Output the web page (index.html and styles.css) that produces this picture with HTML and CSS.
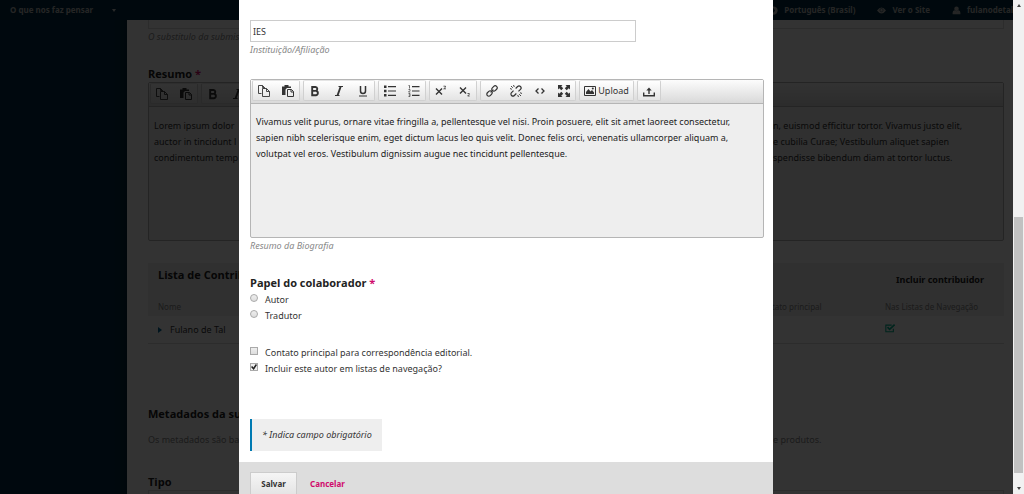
FILE: index.html
```
<!DOCTYPE html>
<html lang="pt-BR">
<head>
<meta charset="utf-8">
<title>Contribuidores</title>
<link rel="stylesheet" href="styles.css">
</head>
<body>
<svg class="defs" aria-hidden="true">
  <symbol id="copy" viewBox="0 0 12 12"><path d="M3.5 8.5h-3v-8h4l2 2v1M4.5.5v2h2M4.500 3.500h4l3 3v5h-7zM8.500 3.500v3h3" fill="none" stroke="currentColor" stroke-width=".9"/></symbol>
  <symbol id="paste" viewBox="0 0 12 12"><path d="M0 1.500h2.500V0h4v1.500H9V3H5L3.500 4.500V10H0z" fill="currentColor"/><path d="M5.500 4.500h4l2 2v5h-6zM9 4.500V7h2.500" fill="none" stroke="currentColor"/></symbol>
  <symbol id="bold" viewBox="0 0 12 12"><path d="M3.200 2h3.200a2 2 0 0 1 .5 3.900A2.100 2.100 0 0 1 6.500 10.200H3.200zM3.200 5.900h3.500" fill="none" stroke="currentColor" stroke-width="1.900"/></symbol>
  <symbol id="italic" viewBox="0 0 12 12"><path d="M5.500 1.500H10M2 10.500h4.500" stroke="currentColor"/><path d="M7.700 1.500l-3.200 9" stroke="currentColor" stroke-width="1.900"/></symbol>
  <symbol id="underline" viewBox="0 0 12 12"><path d="M3.500 1v5a2.500 2.500 0 0 0 5 0V1" fill="none" stroke="currentColor" stroke-width="1.500"/><path d="M2 11h8" stroke="currentColor"/></symbol>
  <symbol id="bullets" viewBox="0 0 12 12"><path d="M0 .5h2.500V3H0zM0 4.800h2.500v2.500H0zM0 9h2.500v2.500H0z" fill="currentColor"/><path d="M4 1.700h8M4 6h8M4 10.300h8" stroke="currentColor" stroke-width="1.200"/></symbol>
  <symbol id="numbers" viewBox="0 0 12 12"><path d="M.5 .5h1V3.500M.5 4.500h1.500v1L.5 7H2.300M.5 8.500H2V11.500H.5M.8 10H2" fill="none" stroke="currentColor" stroke-width=".7"/><path d="M4 1.700h7.500M4 6h7.500M4 10.300h7.500" stroke="currentColor" stroke-width="1.200"/></symbol>
  <symbol id="sup" viewBox="0 0 12 12"><path d="M1 3.500l6 6M7 3.500l-6 6" stroke="currentColor" stroke-width="1.400"/><path d="M8.500 1.200h2v1l-1.800 1.600h2.300" fill="none" stroke="currentColor" stroke-width=".8"/></symbol>
  <symbol id="sub" viewBox="0 0 12 12"><path d="M1 2.500l6 6M7 2.500l-6 6" stroke="currentColor" stroke-width="1.400"/><path d="M8.500 8.500h1.800v.8L8.700 11h2" fill="none" stroke="currentColor" stroke-width=".8"/></symbol>
  <symbol id="link" viewBox="0 0 12 12"><g transform="rotate(-45 6 6)" fill="none" stroke="currentColor" stroke-width="1.200"><rect x="-.5" y="4" width="6" height="4" rx="2"/><rect x="6.500" y="4" width="6" height="4" rx="2"/><path d="M4 6h4"/></g></symbol>
  <symbol id="unlink" viewBox="0 0 12 12"><g transform="rotate(-45 6 6)" fill="none" stroke="currentColor" stroke-width="1.200"><path d="M4.500 4H1.700a2 2 0 0 0 0 4h2.800M7.500 4h2.800a2 2 0 0 1 0 4H7.500"/></g><path d="M3.500 0l.8 2M0 3.500l2 .8M8.500 12l-.8-2M12 8.500l-2-.8M1 1l1.800 1.800M11 11L9.200 9.200" stroke="currentColor" stroke-width=".9"/></symbol>
  <symbol id="code" viewBox="0 0 12 12"><path d="M4.500 3.500L2 6l2.500 2.500M7.500 3.500L10 6 7.500 8.500" fill="none" stroke="currentColor" stroke-width="1.300"/></symbol>
  <symbol id="full" viewBox="0 0 12 12"><path d="M0 0h4.500L3.200 1.300l2 2-1.900 1.900-2-2L0 4.500zM12 0v4.500l-1.300-1.300-2 2-1.900-1.900 2-2L7.500 0zM0 12V7.500l1.300 1.300 2-2 1.900 1.900-2 2L4.500 12zM12 12H7.500l1.300-1.300-2-2 1.900-1.900 2 2L12 7.500z" fill="currentColor"/></symbol>
  <symbol id="image" viewBox="0 0 12 12"><path d="M.5 1.500h11v9H.5z" fill="none" stroke="currentColor"/><path d="M2 9V7l2.500-3 2 2.500L8 5l2 2.500V9z" fill="currentColor"/><circle cx="8.800" cy="3.600" r="1" fill="currentColor"/></symbol>
  <symbol id="load" viewBox="0 0 12 12"><path d="M.7 7.500v3.300h10.600V7.500M6 9V4" fill="none" stroke="currentColor" stroke-width="1.400"/><path d="M6 2.500l2.700 3H3.300z" fill="currentColor"/></symbol>
  <symbol id="globe" viewBox="0 0 12 12"><circle cx="6" cy="6" r="5.500" fill="currentColor"/><path d="M3 2l3 1 2 3-2 3-2-3z" fill="#002c40"/></symbol>
  <symbol id="eye" viewBox="0 0 12 12"><path d="M0 6q6-8 12 0-6 8-12 0z" fill="currentColor"/><circle cx="6" cy="5.500" r="2.200" fill="none" stroke="#002c40" stroke-width=".7"/></symbol>
  <symbol id="user" viewBox="0 0 12 12"><circle cx="6" cy="3.500" r="3" fill="currentColor"/><path d="M.8 11V9q0-3 2.500-3.200Q6 8 8.700 5.800q2.500.2 2.500 3.200v2z" fill="currentColor"/></symbol>
  <symbol id="check" viewBox="0 0 12 12"><path d="M10 7v3.500H1v-8h7" fill="none" stroke="currentColor" stroke-width="1.300"/><path d="M3 5l2.500 2.500L11.500 2" fill="none" stroke="currentColor" stroke-width="2"/></symbol>
</svg>

<div class="viewport">
  <div class="app">
    <header class="topbar">
      <a class="context" href="#">O que nos faz pensar <span class="caret"></span></a>
      <nav class="usernav">
        <a href="#"><svg><use href="#globe"/></svg>Português (Brasil)</a>
        <a href="#"><svg><use href="#eye"/></svg>Ver o Site</a>
        <a class="account" href="#"><svg><use href="#user"/></svg>fulanodetal</a>
      </nav>
    </header>
    <div class="columns">
      <aside class="side"></aside>
      <main class="page">
        <div class="field-end"></div>
        <p class="hint">O substitulo da submiss</p>
        <h2 class="label">Resumo <span class="req">*</span></h2>
        <section class="editor back-editor">
          <div class="toolbar">
            <div class="group"><button aria-label="Copiar"><svg><use href="#copy"/></svg></button><button aria-label="Colar"><svg><use href="#paste"/></svg></button></div>
            <div class="group"><button aria-label="Negrito"><svg><use href="#bold"/></svg></button><button aria-label="Itálico"><svg><use href="#italic"/></svg></button></div>
          </div>
          <div class="abstract">
            <p>Lorem ipsum dolor<br>auctor in tincidunt l<br>condimentum temp</p>
            <p>n, euismod efficitur tortor. Vivamus justo elit,<br>e cubilia Curae; Vestibulum aliquet sapien<br>spendisse bibendum diam at tortor luctus.</p>
          </div>
        </section>
        <section class="list">
          <div class="list-head"><h3>Lista de Contrib</h3><a href="#">Incluir contribuidor</a></div>
          <table>
            <thead><tr><th class="c-name">Nome</th><th class="c-main">Contato principal</th><th class="c-nav">Nas Listas de Navegação</th></tr></thead>
            <tbody><tr><td class="c-name"><span class="expand"></span>Fulano de Tal</td><td></td><td class="c-nav"><svg class="tick"><use href="#check"/></svg></td></tr></tbody>
          </table>
        </section>
        <h2 class="label">Metadados da su</h2>
        <div class="meta"><p>Os metadados são ba</p><p>e produtos.</p></div>
        <h2 class="label">Tipo</h2>
        <div class="type-field"></div>
      </main>
    </div>
  </div>

  <div class="shade">
    <form class="modal">
      <div class="body">
        <input class="affil" id="affil" type="text" value="IES">
        <label class="hint" for="affil">Instituição/Afiliação</label>
        <div class="editor bio">
          <div class="toolbar">
            <div class="group"><button type="button" aria-label="Copiar"><svg><use href="#copy"/></svg></button><button type="button" aria-label="Colar"><svg><use href="#paste"/></svg></button></div>
            <div class="group"><button type="button" aria-label="Negrito"><svg><use href="#bold"/></svg></button><button type="button" aria-label="Itálico"><svg><use href="#italic"/></svg></button><button type="button" aria-label="Sublinhado"><svg><use href="#underline"/></svg></button></div>
            <div class="group"><button type="button" aria-label="Lista"><svg><use href="#bullets"/></svg></button><button type="button" aria-label="Lista numerada"><svg><use href="#numbers"/></svg></button></div>
            <div class="group"><button type="button" aria-label="Sobrescrito"><svg><use href="#sup"/></svg></button><button type="button" aria-label="Subscrito"><svg><use href="#sub"/></svg></button></div>
            <div class="group"><button type="button" aria-label="Link"><svg><use href="#link"/></svg></button><button type="button" aria-label="Remover link"><svg><use href="#unlink"/></svg></button><button type="button" aria-label="Código"><svg><use href="#code"/></svg></button><button type="button" aria-label="Tela cheia"><svg><use href="#full"/></svg></button></div>
            <div class="group"><button type="button" class="wide"><svg><use href="#image"/></svg>Upload</button></div>
            <div class="group"><button type="button" aria-label="Enviar arquivo"><svg><use href="#load"/></svg></button></div>
          </div>
          <textarea id="bio">Vivamus velit purus, ornare vitae fringilla a, pellentesque vel nisi. Proin posuere, elit sit amet laoreet consectetur, sapien nibh scelerisque enim, eget dictum lacus leo quis velit. Donec felis orci, venenatis ullamcorper aliquam a, volutpat vel eros. Vestibulum dignissim augue nec tincidunt pellentesque.</textarea>
        </div>
        <label class="hint" for="bio">Resumo da Biografia</label>
        <fieldset class="roles">
          <legend class="label">Papel do colaborador <span class="req">*</span></legend>
          <label class="choice"><input type="radio" name="role">Autor</label>
          <label class="choice"><input type="radio" name="role">Tradutor</label>
        </fieldset>
        <div class="options">
          <label class="choice"><input type="checkbox">Contato principal para correspondência editorial.</label>
          <label class="choice"><input type="checkbox" checked>Incluir este autor em listas de navegação?</label>
        </div>
        <p class="required-note">* Indica campo obrigatório</p>
      </div>
      <footer class="actions"><button class="save">Salvar</button><a class="cancel" href="#">Cancelar</a></footer>
    </form>
  </div>
</div>
<div class="scrollbar"><span class="up"></span><span class="thumb"></span><span class="down"></span></div>
</body>
</html>
```
FILE: styles.css
```
* { box-sizing: border-box; }
body { margin: 0; height: 100vh; display: flex; overflow: hidden; font: 9px/16px "Noto Sans", sans-serif; color: #333; background: #fff; }
h2, h3, p { margin: 0; }
a { color: inherit; text-decoration: none; }
button, input, textarea { font: inherit; color: inherit; }
svg { width: 12px; height: 12px; flex: none; }
.defs { position: absolute; width: 0; height: 0; }
.viewport { position: relative; flex: 1; min-width: 0; overflow: hidden; }
.app { height: 100%; display: flex; flex-direction: column; overflow: hidden; }

.topbar { flex: none; height: 20px; display: flex; justify-content: space-between; align-items: center; padding-left: 10px; background: #002c40; color: #bbb; font-size: 8px; font-weight: 700; white-space: nowrap; overflow: hidden; }
.context { display: flex; align-items: center; gap: 19px; }
.caret { border: 2px solid transparent; border-top: 3px solid #ccc; border-bottom: 0; }
.usernav { display: flex; gap: 22px; }
.usernav a { display: flex; align-items: center; gap: 6px; }
.usernav svg { width: 9px; height: 9px; }
.usernav .account { width: 61px; }
.columns { flex: 1; min-height: 0; display: flex; }
.side { width: 127px; flex: none; background: linear-gradient(90deg, #002c45, #002c45 90%, #00263a); }
.page { flex: 1; min-width: 0; padding: 0 9px 0 21px; background: #fff; }
.field-end { height: 9px; border: 1px solid #ddd; border-top: 0; }
.hint { display: block; color: #888; font-style: italic; }
.label { font-size: 11px; line-height: 16px; font-weight: 700; color: #222; padding: 0; font-family: "Open Sans", sans-serif; }
.req { color: #d00a6c; }
.page > .label { margin-top: 21px; }

.editor { border: 1px solid #b5b5b5; border-radius: 2px; background: #eee; }
.toolbar { height: 24px; display: flex; gap: 3px; padding: 0 1px 2px; border-bottom: 1px solid #b5b5b5; background: linear-gradient(#fcfcfc, #d9d9d9); }
.group { display: flex; border: 1px solid #d0d0d0; border-top-color: #e5e5e5; border-radius: 2px; background: linear-gradient(#fff, #e4e4e4); }
.group button { width: 24px; margin: 0 -1px; padding: 0; border: 0; background: none; display: flex; align-items: center; justify-content: center; gap: 2px; color: #333; }
.group button + button { margin-left: 1px; }
.group .wide { width: 55px; }
.back-editor { height: 159px; }
.abstract { display: grid; grid-template-columns: 619px 1fr; padding: 11px 5px; white-space: nowrap; }
.abstract p:first-child { overflow: hidden; }

.list { margin-top: 22px; border-bottom: 1px solid #ddd; }
.list-head { display: flex; justify-content: space-between; padding: 4px 20px 0 10px; height: 34px; background: #eee; font-size: 11px; font-weight: 700; color: #222; }
.list-head h3 { font-size: 11px; font-family: "Open Sans", sans-serif; }
.list-head a { padding-top: 5px; font-size: 9px; }
table { width: 100%; border-collapse: collapse; table-layout: fixed; }
th { padding: 0 0 0 10px; height: 19px; background: #eee; font-size: 8px; line-height: 16px; font-weight: 400; text-align: left; color: #888; white-space: nowrap; }
td { padding: 0 0 0 10px; height: 27px; line-height: 16px; }
.c-main { width: 128px; }
.c-nav { width: 129px; }
.expand { display: inline-block; margin-right: 8px; border: 3px solid transparent; border-left: 4px solid #006798; border-right: 0; }
.tick { width: 10px; height: 10px; color: #00b28d; }
.list + .label.label { margin-top: 62px; }
.meta { display: grid; grid-template-columns: 625px 1fr; padding-top: 10px; color: #888; white-space: nowrap; }
.meta + .label.label { margin-top: 26px; }
.type-field { height: 20px; border: 1px solid #ddd; }

.shade { position: absolute; inset: 0; display: flex; justify-content: center; padding-right: 1px; background: rgba(0, 0, 0, .8); }
.modal { width: 534px; max-width: 100%; background: #fff; }
.body { padding: 20px 9px 11px 11px; }
.affil { display: block; width: 75%; height: 22px; padding: 0 2px; border: 1px solid #ccc; background: #fff; }
.bio { margin-top: 21px; }
.bio textarea { display: block; width: 100%; height: 133px; padding: 10px 5px; border: 0; resize: none; background: none; overflow: hidden; color: #222; outline: 0; }
.roles { margin: 21px 0 0; padding: 0; border: 0; }
.choice { display: flex; align-items: flex-start; gap: 7px; height: 16px; line-height: 18px; color: #333; }
.choice input { flex: none; appearance: none; width: 8px; height: 8px; margin: 3px 0 0; border: 1px solid #aaa; background: linear-gradient(#eee, #ddd); }
.choice input[type="radio"] { border-radius: 50%; }
.choice input:checked { display: grid; background: #eee; }
.choice input:checked::before { content: ""; background: #222; clip-path: polygon(0 50%, 20% 35%, 40% 60%, 80% 0, 100% 15%, 45% 100%); }
.options { margin-top: 21px; }
.required-note { width: fit-content; margin-top: 43px; padding: 8px 10px; border-left: 2px solid #007ab2; background: #eee; font-style: italic; color: #333; }
.actions { display: flex; align-items: flex-start; gap: 13px; height: 60px; padding: 10px 11px; background: #ddd; font-size: 8px; font-weight: 700; line-height: 22px; }
.save { width: 47px; height: 24px; padding: 0; border: 1px solid #ccc; background: linear-gradient(#f5f5f5, #e4e4e4); }
.cancel { padding-top: 1px; color: #d00a6c; }

.scrollbar { width: 11px; flex: none; display: flex; flex-direction: column; align-items: center; background: #f1f1f1; }
.up { margin-top: 4px; border: 2px solid transparent; border-bottom: 3px solid #444; border-top: 0; }
.thumb { width: 9px; margin: 210px 0 14px; flex: 1; background: #c1c1c1; }
.down { margin-bottom: 4px; border: 2px solid transparent; border-top: 3px solid #444; border-bottom: 0; }
```
